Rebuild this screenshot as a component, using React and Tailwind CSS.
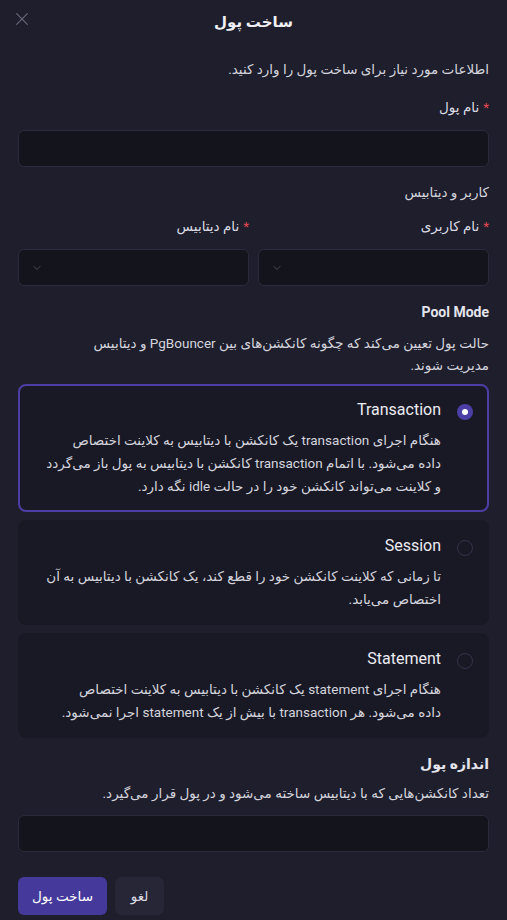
import { useState } from "react";

const modes = [
    {
        id: "transaction",
        title: "Transaction",
        lines: [
            "هنگام اجرای transaction یک کانکشن با دیتابیس به کلاینت اختصاص",
            "داده می‌شود. با اتمام transaction کانکشن با دیتابیس به پول باز می‌گردد",
            "و کلاینت می‌تواند کانکشن خود را در حالت idle نگه دارد.",
        ],
    },
    {
        id: "session",
        title: "Session",
        lines: [
            "تا زمانی که کلاینت کانکشن خود را قطع کند، یک کانکشن با دیتابیس به آن",
            "اختصاص می‌یابد.",
        ],
    },
    {
        id: "statement",
        title: "Statement",
        lines: [
            "هنگام اجرای statement یک کانکشن با دیتابیس به کلاینت اختصاص",
            "داده می‌شود. هر transaction با بیش از یک statement اجرا نمی‌شود.",
        ],
    },
]

function Chevron() {
    return (
        <svg width="12" height="12" viewBox="0 0 24 24" fill="none" stroke="currentColor" strokeWidth="2" strokeLinecap="round" strokeLinejoin="round">
            <path d="m6 9 6 6 6-6" />
        </svg>
    )
}

function Label({ children }) {
    return (
        <label className="flex items-center gap-1 text-[13.5px] leading-[20px] text-[#dcdce4]">
            <span className="text-[#e5484d]">*</span>
            {children}
        </label>
    )
}

export default function App() {
    const [mode, setMode] = useState("transaction")

    return (
        <div dir="rtl" className="min-h-[920px] w-full bg-[#1e1e2d] text-[#e4e4ec] px-[18px]" style={{ fontFamily: "Roboto, 'DejaVu Sans', sans-serif" }}>
            <div className="relative flex h-[42px] items-center justify-center pt-[2px]">
                <h2 className="text-[15px] font-bold text-[#f0f0f5]">ساخت پول</h2>
                <button className="absolute left-[-4px] top-[11px] text-[#6c6c7c]" aria-label="بستن">
                    <svg width="16" height="16" viewBox="0 0 24 24" fill="none" stroke="currentColor" strokeWidth="1.6" strokeLinecap="round">
                        <path d="M4 4l16 16M20 4L4 20" />
                    </svg>
                </button>
            </div>

            <p className="mt-[17px] text-[13.5px] leading-[20px] text-[#d4d4dc]">اطلاعات مورد نیاز برای ساخت پول را وارد کنید.</p>

            <div className="mt-[18px]">
                <Label>نام پول</Label>
                <input className="mt-[13px] block h-[37px] w-full rounded-md border border-[#2a2a3c] bg-[#14141c] px-3 text-sm outline-none" />
            </div>

            <p className="mt-[15px] text-[13.5px] leading-[20px] text-[#d4d4dc]">کاربر و دیتابیس</p>

            <div className="mt-[14px] grid grid-cols-2 gap-[9px]">
                {["نام کاربری", "نام دیتابیس"].map(l => (
                    <div key={l}>
                        <Label>{l}</Label>
                        <button className="mt-[13px] flex h-[37px] w-full items-center justify-end rounded-md border border-[#2a2a3c] bg-[#14141c] px-[12px] text-[#4a4a5a]">
                            <Chevron />
                        </button>
                    </div>
                ))}
            </div>

            <h3 className="mt-[16px] text-[14px] leading-[20px] font-bold text-[#e4e4ec]" dir="ltr" style={{ textAlign: "right" }}>Pool Mode</h3>
            <p className="mt-[10px] text-[13.5px] leading-[22px] text-[#d4d4dc]">
                حالت پول تعیین می‌کند که چگونه کانکشن‌های بین PgBouncer و دیتابیس
                <br />
                مدیریت شوند.
            </p>

            <div className="mt-[8px] flex flex-col gap-[8px]">
                {modes.map(m => {
                    const active = m.id === mode
                    return (
                        <div
                            key={m.id}
                            onClick={() => setMode(m.id)}
                            className={`flex cursor-pointer items-start gap-[16px] rounded-lg pr-[14px] pl-[12px] pt-[12px] pb-[12px] bg-[#191926] border-2 ${active ? "border-[#4b3fa6]" : "border-[#191926]"}`}
                        >
                            <span className={`mt-[6px] flex h-[16px] w-[16px] shrink-0 items-center justify-center rounded-full ${active ? "bg-[#4b3fa6]" : "border border-[#33334a]"}`}>
                                {active && <span className="h-[6px] w-[6px] rounded-full bg-white" />}
                            </span>
                            <div className="min-w-0 flex-1">
                                <div className="text-[16px] leading-[24px] text-[#ececf2]">{m.title}</div>
                                <p className="mt-[7px] text-[13.5px] leading-[23px] text-[#d4d4dc]">
                                    {m.lines.map((line, i) => (
                                        <span key={i} className="block whitespace-nowrap">{line}</span>
                                    ))}
                                </p>
                            </div>
                        </div>
                    )
                })}
            </div>

            <h3 className="mt-[16px] text-[14px] leading-[20px] font-bold text-[#e4e4ec]">اندازه پول</h3>
            <p className="mt-[9px] text-[13.5px] leading-[20px] text-[#d4d4dc]">تعداد کانکشن‌هایی که با دیتابیس ساخته می‌شود و در پول قرار می‌گیرد.</p>
            <input className="mt-[12px] block h-[37px] w-full rounded-md border border-[#2a2a3c] bg-[#14141c] px-3 text-sm outline-none" />

            <div className="mt-[25px] flex justify-start gap-[8px]" dir="ltr">
                <button className="h-[38px] w-[89px] rounded-md bg-[#453a9b] text-[13.5px] text-white">ساخت پول</button>
                <button className="h-[38px] w-[49px] rounded-md bg-[#262636] text-[13.5px] text-[#dcdce4]">لغو</button>
            </div>
        </div>
    )
}
